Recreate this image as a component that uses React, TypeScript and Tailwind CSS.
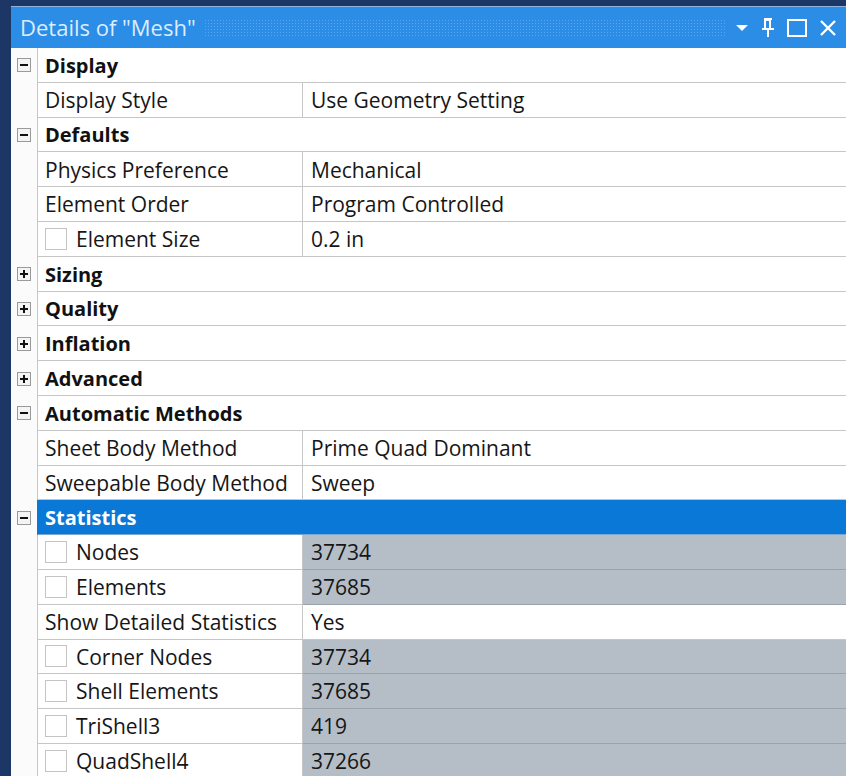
import React from 'react';

type Row =
  | { kind: 'group'; label: string; open: boolean; selected?: boolean }
  | { kind: 'prop'; label: string; value: string; check?: boolean; readOnly?: boolean };

const rows: Row[] = [
  { kind: 'group', label: 'Display', open: true },
  { kind: 'prop', label: 'Display Style', value: 'Use Geometry Setting' },
  { kind: 'group', label: 'Defaults', open: true },
  { kind: 'prop', label: 'Physics Preference', value: 'Mechanical' },
  { kind: 'prop', label: 'Element Order', value: 'Program Controlled' },
  { kind: 'prop', label: 'Element Size', value: '0.2 in', check: true },
  { kind: 'group', label: 'Sizing', open: false },
  { kind: 'group', label: 'Quality', open: false },
  { kind: 'group', label: 'Inflation', open: false },
  { kind: 'group', label: 'Advanced', open: false },
  { kind: 'group', label: 'Automatic Methods', open: true },
  { kind: 'prop', label: 'Sheet Body Method', value: 'Prime Quad Dominant' },
  { kind: 'prop', label: 'Sweepable Body Method', value: 'Sweep' },
  { kind: 'group', label: 'Statistics', open: true, selected: true },
  { kind: 'prop', label: 'Nodes', value: '37734', check: true, readOnly: true },
  { kind: 'prop', label: 'Elements', value: '37685', check: true, readOnly: true },
  { kind: 'prop', label: 'Show Detailed Statistics', value: 'Yes' },
  { kind: 'prop', label: 'Corner Nodes', value: '37734', check: true, readOnly: true },
  { kind: 'prop', label: 'Shell Elements', value: '37685', check: true, readOnly: true },
  { kind: 'prop', label: 'TriShell3', value: '419', check: true, readOnly: true },
  { kind: 'prop', label: 'QuadShell4', value: '37266', check: true, readOnly: true },
];

const ExpandBox = ({ open }: { open: boolean }) => (
  <div className="w-[14px] h-[14px] border border-[#9a9a9a] bg-[#f4f4f4] flex items-center justify-center">
    <svg width="10" height="10" viewBox="0 0 10 10">
      <rect x="1" y="4" width="8" height="2" fill="#111" />
      {!open && <rect x="4" y="1" width="2" height="8" fill="#111" />}
    </svg>
  </div>
);

const CheckBox = () => (
  <div className="w-[22px] h-[22px] border border-[#c4c4c4] bg-white shrink-0 mr-[9px]" />
);

const TitleIcons = () => (
  <div className="flex items-center gap-[10px] text-white">
    <svg width="16" height="16" viewBox="0 0 16 16">
      <path d="M2 5h12l-6 6z" fill="#fff" />
    </svg>
    <svg width="16" height="22" viewBox="0 0 16 22">
      <path d="M4 2h8M5 2v10M10 2v10M5 3h5M2 12h12M8 12v8" stroke="#fff" strokeWidth="2" fill="none" />
    </svg>
    <svg width="22" height="20" viewBox="0 0 22 20">
      <rect x="2" y="2" width="18" height="16" stroke="#fff" strokeWidth="2" fill="none" />
    </svg>
    <svg width="20" height="20" viewBox="0 0 20 20">
      <path d="M3 3l14 14M17 3L3 17" stroke="#fff" strokeWidth="2.4" />
    </svg>
  </div>
);

export default function App() {
  return (
    <div
      className="w-[846px] h-[776px] overflow-hidden bg-[#1c3766] pl-[11px] pt-[6px]"
      style={{ fontFamily: '"Open Sans", "Noto Sans", sans-serif' }}
    >
      <div className="border-t border-[#8fb4e0] bg-white">
        {/* title bar */}
        <div className="h-[41px] bg-[#2b8de6] flex items-center pl-[9px] pr-[8px]">
          <span className="text-[22px] text-[#dcecff] whitespace-nowrap">Details of "Mesh"</span>
          <div
            className="flex-1 h-[18px] mx-[8px] opacity-40"
            style={{
              backgroundImage: 'radial-gradient(#9cc8f5 0.8px, transparent 0.9px)',
              backgroundSize: '3px 3px',
            }}
          />
          <TitleIcons />
        </div>

        {/* property grid */}
        <div className="flex flex-col">
          {rows.map((row, i) => (
            <div key={i} className="flex h-[34.8px]">
              <div className="w-[26px] shrink-0 bg-[#fbfbfb] flex items-center justify-center">
                {row.kind === 'group' && <ExpandBox open={row.open} />}
              </div>
              {row.kind === 'group' ? (
                <div
                  className={`flex-1 flex items-center pl-[7px] pt-[2px] text-[20px] font-bold border-l border-b ${
                    row.selected
                      ? 'bg-[#0a78d6] text-white border-l-[#0a78d6] border-b-[#7aa7cf]'
                      : 'bg-white text-[#111] border-[#c6c6c6]'
                  }`}
                >
                  {row.label}
                </div>
              ) : (
                <>
                  <div className="w-[266px] shrink-0 flex items-center pl-[7px] text-[21px] font-medium text-[#161616] bg-white border-l border-b border-r border-[#c6c6c6]">
                    {row.check && <CheckBox />}
                    <span className="whitespace-nowrap pt-[2px]">{row.label}</span>
                  </div>
                  <div
                    className={`flex-1 flex items-center pl-[8px] pt-[2px] text-[21px] font-medium text-[#161616] border-b ${
                      row.readOnly ? 'bg-[#b5bec7] border-[#9aa2aa]' : 'bg-white border-[#c6c6c6]'
                    }`}
                  >
                    {row.value}
                  </div>
                </>
              )}
            </div>
          ))}
        </div>
      </div>
    </div>
  );
}
